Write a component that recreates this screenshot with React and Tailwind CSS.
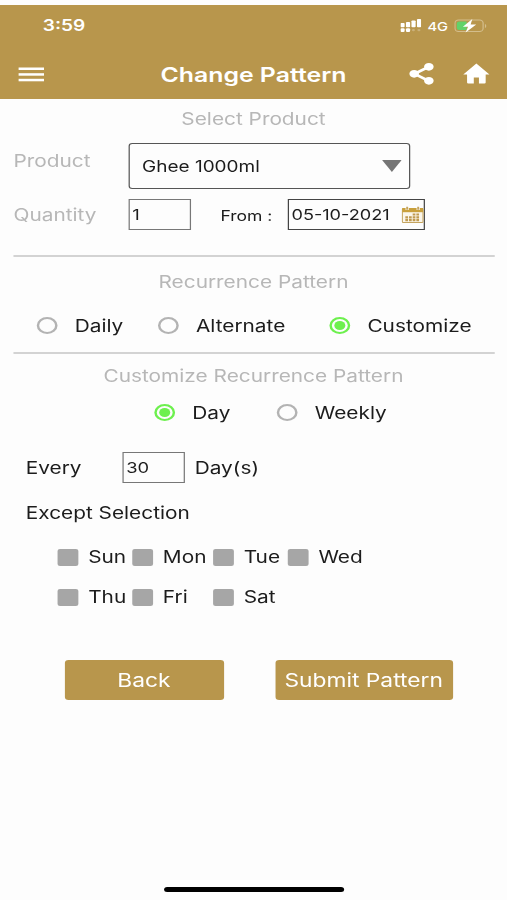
import { useState } from 'react';

const DAYS = ['Sun', 'Mon', 'Tue', 'Wed', 'Thu', 'Fri', 'Sat'];

function SignalIcon() {
  return (
    <svg width="17" height="14" viewBox="0 0 17 14" fill="#fff">
      <rect x="0" y="4" width="3.4" height="4.2" rx="0.8" />
      <rect x="4.5" y="3" width="3.4" height="5.2" rx="0.8" />
      <rect x="9" y="1.5" width="3.4" height="6.7" rx="0.8" />
      <rect x="13.5" y="0" width="3.4" height="8.2" rx="0.8" />
      <rect x="0" y="9.3" width="3.4" height="3.7" rx="1" />
      <rect x="4.5" y="9.3" width="3.4" height="3.7" rx="1" />
      <rect x="9.4" y="10" width="2.4" height="2.2" rx="1" opacity="0.25" />
      <rect x="13.9" y="10" width="2.4" height="2.2" rx="1" opacity="0.25" />
    </svg>
  );
}

function BatteryIcon() {
  return (
    <svg width="27" height="14" viewBox="0 0 27 14">
      <rect x="0.5" y="1" width="23" height="11.5" rx="3" fill="none" stroke="#d3bd8c" />
      <path d="M25 5v4c1.4-.5 1.4-3.5 0-4z" fill="#d3bd8c" />
      <path d="M4 2.5h6V11H4a2 2 0 0 1-2-2V4.500a2 2 0 0 1 2-2z" fill="#62d26a" />
      <path d="M14.700 0 7 7.800h4.200L9.200 13.600l8.700-8.100h-4.600z" fill="#fff" />
    </svg>
  );
}

function MenuIcon() {
  return (
    <svg width="21" height="15" viewBox="0 0 21 15" fill="#fff">
      <rect y="0.5" width="21" height="2.5" />
      <rect y="6.2" width="21" height="2.5" />
      <rect y="11.8" width="21" height="2.5" />
    </svg>
  );
}

function ShareIcon() {
  return (
    <svg width="21" height="24" viewBox="0 0 21 24">
      <path d="M16 4.8 4.500 11.800 16 18.800" fill="none" stroke="#fff" strokeWidth="2.600" />
      <circle cx="16.2" cy="4.8" r="3.9" fill="#fff" />
      <circle cx="4.2" cy="11.8" r="3.9" fill="#fff" />
      <circle cx="16.2" cy="18.8" r="3.9" fill="#fff" />
    </svg>
  );
}

function HomeIcon() {
  return (
    <svg width="22" height="22" viewBox="0 0 22 22" fill="#fff">
      <path d="M11 .6.3 11.400h3.100v8.200q0 1 1 1h4.500v-6.100h4.200v6.100h4.500q1 0 1-1v-8.200h3.100z" />
    </svg>
  );
}

function CalendarIcon() {
  return (
    <svg width="18" height="18" viewBox="0 0 18 18">
      <rect x="0.5" y="2.5" width="17" height="14" rx="1" fill="#fbf6ea" stroke="#c4a45f" />
      <rect x="0.5" y="2" width="17" height="4.2" fill="#c9a03c" />
      <path d="M4.500 0v4M13.500 0v4" stroke="#fff" strokeWidth="2.600" />
      <path d="M4.500.8v3M13.500.8v3" stroke="#c4a45f" strokeWidth="1.600" />
      <path
        d="M9 8.500h6M3 11.400h12M3 14.200h12"
        stroke="#c09a50"
        strokeWidth="2.200"
        strokeDasharray="2.200 0.800"
      />
    </svg>
  );
}

function SectionTitle({ children }) {
  return <h2 className="h-6 pt-px text-center text-[17px] leading-[25px] text-[#b7b7b7]">{children}</h2>;
}

function Radio({ checked, label, onChange, labelClass }) {
  return (
    <button type="button" onClick={onChange} className="flex items-center">
      <span
        className={
          checked
            ? 'mb-px flex size-[17px] items-center justify-center rounded-full border-2 border-[#6df04e]'
            : 'mb-px flex size-[17px] rounded-full border-2 border-[#b3b3b3]'
        }
      >
        {checked && <span className="size-[9px] rounded-full bg-[#6df04e]" />}
      </span>
      <span className={`ml-[14px] pt-px text-left whitespace-nowrap ${labelClass}`}>{label}</span>
    </button>
  );
}

function Header() {
  return (
    <header className="mt-[5px] h-[94px] bg-[#b8964c] text-white">
      <div className="flex h-[42px] items-center pl-[35px]">
        <span className="w-[292px] text-[15.6px] font-semibold">3:59</span>
        <SignalIcon />
        <span className="ml-[5px] w-[22px] pt-px text-[12px] font-medium">4G</span>
        <BatteryIcon />
      </div>
      <div className="flex h-[54px] items-center pl-[15px]">
        <MenuIcon />
        <h1 className="ml-[75px] w-[223px] pt-[2px] pl-5 text-[20.3px] font-semibold whitespace-nowrap">
          Change Pattern
        </h1>
        <ShareIcon />
        <span className="ml-[23px]">
          <HomeIcon />
        </span>
      </div>
    </header>
  );
}

export default function App() {
  const [recurrence, setRecurrence] = useState('Customize');
  const [unit, setUnit] = useState('Day');

  return (
    <div className="h-[900px] w-[507px] overflow-hidden bg-[#fdfdfd]">
      {/* 414pt wide canvas, widened to fill the window */}
      <div className="flex h-[900px] w-[414px] origin-top-left scale-x-[1.2246] flex-col font-[Inter,sans-serif] text-[17px] text-[#1c1c1c]">
        <Header />

        {/* Product */}
        <section className="h-[156px] pt-[7px]">
          <SectionTitle>Select Product</SectionTitle>
          <div className="mt-[13px] flex h-[46px] pl-[11px]">
            <span className="mt-[6px] w-[94px] leading-6 text-[#b7b7b7]">Product</span>
            <div className="flex w-[230px] items-center justify-between rounded-[3px] border border-[#555] pr-[6px] pl-[10px] text-[15.5px]">
              <span className="pt-[2px]">Ghee 1000ml</span>
              <svg width="16" height="12" viewBox="0 0 16 12" fill="#757575">
                <path d="M0 0h16L8 12z" />
              </svg>
            </div>
          </div>
          <div className="mt-[10px] flex h-[31px] items-center pl-[11px]">
            <span className="w-[94px] pt-[3px] text-[#b7b7b7]">Quantity</span>
            <div className="flex h-[31px] w-[51px] items-center border border-[#777] pt-px pl-[2px] text-[15px]">
              1
            </div>
            <span className="ml-[24px] w-[55px] pt-[2px] text-[14.3px]">From :</span>
            <div className="flex h-[31px] w-[112px] items-center justify-between border border-[#444] pl-[2px] text-[14.8px]">
              <span className="pt-px">05-10-2021</span>
              <CalendarIcon />
            </div>
          </div>
        </section>

        <hr className="mx-[11px] w-[393px] border-0 border-t-2 border-[#d3d3d3]" />

        {/* Recurrence */}
        <section className="h-[95px] pt-3">
          <SectionTitle>Recurrence Pattern</SectionTitle>
          <div className="mt-[21px] flex h-6 pl-[30px]">
            <Radio
              label="Daily"
              labelClass="w-[68px]"
              checked={recurrence === 'Daily'}
              onChange={() => setRecurrence('Daily')}
            />
            <Radio
              label="Alternate"
              labelClass="w-[109px]"
              checked={recurrence === 'Alternate'}
              onChange={() => setRecurrence('Alternate')}
            />
            <Radio
              label="Customize"
              labelClass="w-[90px]"
              checked={recurrence === 'Customize'}
              onChange={() => setRecurrence('Customize')}
            />
          </div>
        </section>

        <hr className="mx-[11px] w-[393px] border-0 border-t-2 border-[#d3d3d3]" />

        {/* Customize */}
        <section className="pt-[9px]">
          <SectionTitle>Customize Recurrence Pattern</SectionTitle>
          <div className="mt-[14px] flex h-6 pl-[126px]">
            <Radio
              label="Day"
              labelClass="w-[69px]"
              checked={unit === 'Day'}
              onChange={() => setUnit('Day')}
            />
            <Radio
              label="Weekly"
              labelClass="w-[70px]"
              checked={unit === 'Weekly'}
              onChange={() => setUnit('Weekly')}
            />
          </div>
          <div className="mt-[27px] flex h-[31px] items-center pl-[21px]">
            <span className="w-[79px] pt-[2px]">Every</span>
            <div className="flex h-[31px] w-[51px] items-center border border-[#777] pt-px pl-[2px] text-[15px]">
              30
            </div>
            <span className="ml-2 pt-[2px]">Day(s)</span>
          </div>
          <p className="mt-[18px] pl-[21px] leading-6">Except Selection</p>
          <div className="mt-3 ml-[47px] grid grid-cols-[61px_66px_61px_90px] grid-rows-[40px_40px]">
            {DAYS.map((day) => (
              <label key={day} className="flex items-center">
                <span className="size-[17px] rounded-[2px] bg-[#a6a6a6]" />
                <span className="ml-2 pt-[2px]">{day}</span>
              </label>
            ))}
          </div>
        </section>

        <div className="mt-[43px] flex h-10 pl-[52.5px] text-[18.6px] text-white">
          <button type="button" className="w-[130px] rounded-[3px] bg-[#b8964c] pt-[2px]">
            Back
          </button>
          <button
            type="button"
            className="ml-[42px] w-[145px] rounded-[3px] bg-[#b8964c] pt-[2px] whitespace-nowrap"
          >
            Submit Pattern
          </button>
        </div>

        <div className="mt-auto mb-[8px] ml-[134px] h-[5px] w-[147px] rounded-full bg-black" />
      </div>
    </div>
  );
}
